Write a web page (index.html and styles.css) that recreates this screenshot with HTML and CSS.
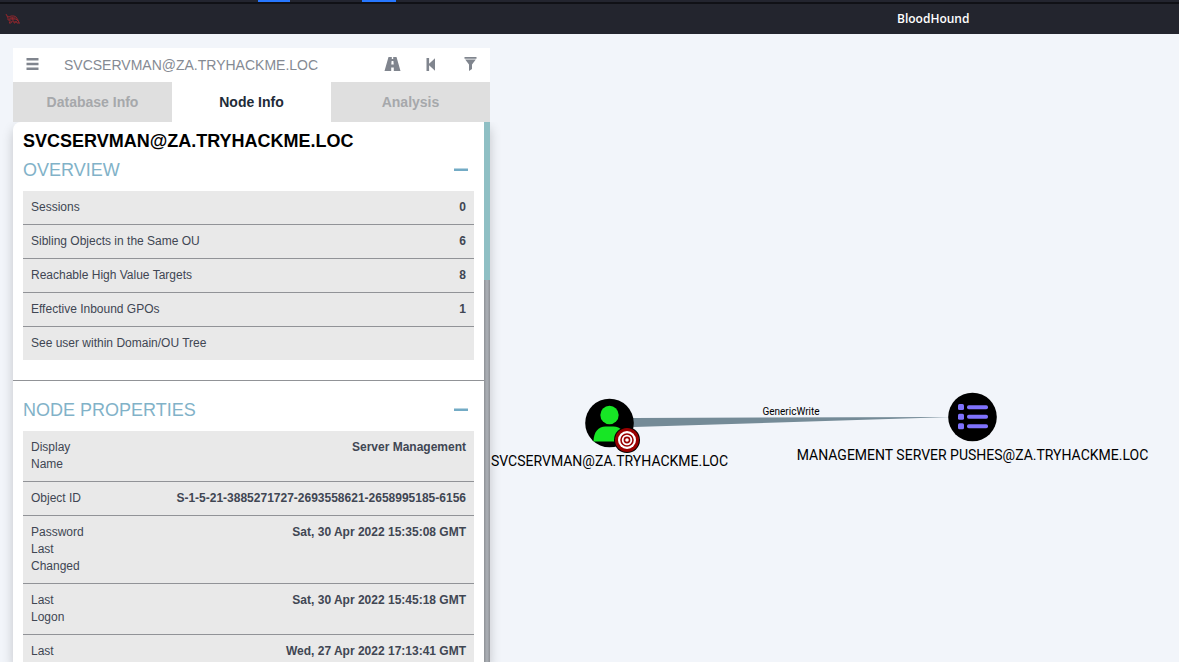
FILE: index.html
```html
<!DOCTYPE html>
<html lang="en">
<head>
<meta charset="utf-8">
<title>BloodHound</title>
<link rel="stylesheet" href="styles.css">
</head>
<body>
<div class="desktop-strip"><span class="task task-first"></span><span class="task task-second"></span></div>
<header class="titlebar">
  <svg class="logo" width="16" height="12" viewBox="0 0 16 12" aria-hidden="true">
    <path d="M1 1l1 2 2 1 2-1 3 0 2 1 2 3 1 3M2 3l1 2 0 2 2 0 0 2-1 1 2 0 1-2 2 0 0 2 1 0 1-2 1 2 3 0M5 5l5 0M4 6l7 0 2 2M7 4l1 3" />
  </svg>
  <h1 class="app-title">BloodHound</h1>
</header>
<main class="stage">
  <section class="graph" aria-label="Graph">
    <svg class="edges" aria-hidden="true"><polygon points="610,384 634,384 952,383 634,393 610,394"/></svg>
    <span class="edge-label">GenericWrite</span>
    <div class="node node-user">
      <svg width="51" height="50" viewBox="0 0 51 50" aria-hidden="true">
        <circle cx="25.5" cy="25" r="24.3"/>
        <circle cx="25.5" cy="17" r="9.2" fill="#17e625"/>
        <path d="M9.5 43.5C9.5 34 14.5 28.5 21.5 28.5h8C36.5 28.5 41.5 34 41.5 43.5z" fill="#17e625"/>
      </svg>
      <svg class="target" width="28" height="28" viewBox="0 0 28 28" aria-hidden="true">
        <circle cx="14" cy="14" r="13"/>
        <circle cx="14" cy="14" r="12" fill="#990000"/>
        <circle cx="14" cy="14" r="9" fill="#fff"/>
        <circle cx="14" cy="14" r="6" fill="none" stroke="#990000" stroke-width="1.6"/>
        <circle cx="14" cy="14" r="2.6" fill="none" stroke="#990000" stroke-width="1.6"/>
      </svg>
      <span class="node-label">SVCSERVMAN@ZA.TRYHACKME.LOC</span>
    </div>
    <div class="node node-gpo">
      <svg width="51" height="50" viewBox="0 0 51 50" aria-hidden="true">
        <circle cx="25.5" cy="25" r="24.3"/>
        <g fill="#7f72fd">
          <rect x="11" y="12" width="6" height="6" rx="1.5"/><rect x="20" y="13.3" width="21" height="4" rx="1.8"/>
          <rect x="11" y="21.8" width="6" height="6" rx="1.5"/><rect x="20" y="22.8" width="21" height="4" rx="1.8"/>
          <rect x="11" y="31.2" width="6" height="6" rx="1.5"/><rect x="20" y="32.2" width="21" height="4" rx="1.8"/>
        </g>
      </svg>
      <span class="node-label">MANAGEMENT SERVER PUSHES@ZA.TRYHACKME.LOC</span>
    </div>
  </section>

  <aside class="panel">
    <form class="search">
      <button class="icon-btn" type="button" aria-label="Menu">
        <svg width="13" height="12" viewBox="0 0 13 12"><path d="M.5 0h12v2.4H.5zM.5 4.8h12v2.4H.5zM.5 9.6h12V12H.5z"/></svg>
      </button>
      <input class="query" type="text" aria-label="Search for a node" value="SVCSERVMAN@ZA.TRYHACKME.LOC">
      <button class="icon-btn" type="button" aria-label="Pathfinding">
        <svg width="17" height="14" viewBox="0 0 17 14"><path fill-rule="evenodd" d="M4.5 0H7.8V2H9.2V0H12.5L16.5 14H9.8V10.5H7.2V14H.5zM7.6 4L7.3 7.5H9.7L9.4 4z"/></svg>
      </button>
      <button class="icon-btn" type="button" aria-label="Back">
        <svg width="10" height="13" viewBox="0 0 10 13"><path d="M.5 0h2.6v5.8L9 .3v12.4L3.1 7.2V13H.5z"/></svg>
      </button>
      <button class="icon-btn" type="button" aria-label="Filter">
        <svg width="13" height="14" viewBox="0 0 13 14"><path d="M.5 0h12v1.7H.5zM1.2 2.4h10.6L8 7.5V12L5 14V7.5z"/></svg>
      </button>
    </form>
    <nav class="tabs">
      <button class="tab" type="button">Database Info</button>
      <button class="tab tab-active" type="button">Node Info</button>
      <button class="tab" type="button">Analysis</button>
    </nav>
    <div class="sheet">
      <div class="content">
        <h2 class="node-name">SVCSERVMAN@ZA.TRYHACKME.LOC</h2>
        <div class="section-head"><h3 class="section-title">OVERVIEW</h3><button class="collapse" type="button" aria-label="Collapse overview"></button></div>
        <table class="facts">
          <tr><th scope="row">Sessions</th><td>0</td></tr>
          <tr><th scope="row">Sibling Objects in the Same OU</th><td>6</td></tr>
          <tr><th scope="row">Reachable High Value Targets</th><td>8</td></tr>
          <tr><th scope="row">Effective Inbound GPOs</th><td>1</td></tr>
          <tr><th scope="row">See user within Domain/OU Tree</th><td></td></tr>
        </table>
        <hr class="divider">
        <div class="section-head"><h3 class="section-title">NODE PROPERTIES</h3><button class="collapse" type="button" aria-label="Collapse node properties"></button></div>
        <table class="facts facts-narrow">
          <tr><th scope="row">Display Name</th><td>Server Management</td></tr>
          <tr><th scope="row">Object ID</th><td>S-1-5-21-3885271727-2693558621-2658995185-6156</td></tr>
          <tr><th scope="row">Password Last Changed</th><td>Sat, 30 Apr 2022 15:35:08 GMT</td></tr>
          <tr><th scope="row">Last Logon</th><td>Sat, 30 Apr 2022 15:45:18 GMT</td></tr>
          <tr><th scope="row">Last</th><td>Wed, 27 Apr 2022 17:13:41 GMT</td></tr>
        </table>
      </div>
      <div class="scrollbar"><div class="thumb"></div></div>
    </div>
  </aside>
</main>
</body>
</html>
```
FILE: styles.css
```css
* { box-sizing: border-box; }
body {
  margin: 0;
  height: 100vh;
  display: flex;
  flex-direction: column;
  overflow: hidden;
  background: #f2f5fa;
  font-family: "Liberation Sans", Arial, sans-serif;
  font-size: 12px;
  color: #404653;
}
h1, h2, h3 { margin: 0; }
button { border: 0; padding: 0; font: inherit; color: inherit; background: none; }

.desktop-strip {
  flex: none;
  display: flex;
  height: 4px;
  background: #23252f;
  border-bottom: 2px solid #101116;
}
.task { height: 2px; background: #2777ff; }
.task-first { width: 32px; margin-left: 258px; }
.task-second { width: 34px; margin-left: 72px; }
.titlebar {
  flex: none;
  display: flex;
  align-items: center;
  height: 30px;
  background: #23252e;
}
.logo { margin-left: 5px; fill: none; stroke: #8e262c; stroke-width: 1; }
.app-title {
  margin-left: calc(76% - 20px);
  font: 600 12px/30px "Open Sans", "Noto Sans", sans-serif;
  color: #fff;
}

.stage { position: relative; flex: 1; min-height: 0; display: flex; padding: 14px 13px 0; }
.graph { position: absolute; inset: 0; font-family: Roboto, sans-serif; color: #000; }
.edges { width: 100%; height: 100%; display: block; fill: #758b97; }
.edge-label { position: absolute; left: 791px; top: 372px; transform: translateX(-50%); font-size: 10px; line-height: 12px; }
.node { position: absolute; width: 51px; height: 50px; }
.node-user { left: 584px; top: 364px; }
.node-gpo { left: 947px; top: 358px; }
.target { position: absolute; left: 29px; top: 28px; }
.node-label {
  position: absolute;
  left: 50%;
  top: 54px;
  transform: translateX(-50%);
  white-space: nowrap;
  font-size: 14px;
  line-height: 18px;
}

.panel {
  position: relative;
  width: 477px;
  max-width: 100%;
  display: flex;
  flex-direction: column;
}
.search {
  flex: none;
  display: flex;
  align-items: center;
  height: 34px;
  padding: 0 13px;
  background: #fff;
}
.icon-btn { display: flex; justify-content: center; flex: none; padding-bottom: 2px; fill: #80858e; }
.icon-btn + .icon-btn { margin-left: 25px; }
.icon-btn:last-child { margin-left: 28px; }
.query {
  flex: 1;
  min-width: 0;
  margin-left: 25px;
  padding: 0;
  border: 0;
  background: none;
  font: 14px "Liberation Sans", Arial, sans-serif;
  color: #858a93;
}
.tabs { flex: none; display: grid; grid-template-columns: repeat(3, 1fr); height: 40px; }
.tab { background: #dfdfdf; color: #a6a8ab; font-size: 14px; font-weight: bold; }
.tab-active { background: #fff; color: #222b38; }

.sheet {
  flex: 1;
  min-height: 0;
  display: flex;
  background: #fff;
  border-radius: 8px 0 0 0;
  box-shadow: 0 6px 12px rgba(0, 0, 0, 0.2);
  clip-path: inset(0 -20px -20px -20px);
}
.content { flex: 1; min-width: 0; overflow: hidden; padding-top: 8px; }
.scrollbar { flex: none; width: 6px; background: linear-gradient(90deg, #8e9196, #a7abb1 40%, #a7abb1 60%, #8e9196); }
.thumb { height: 158px; background: #8fbfc4; }

.node-name { padding: 0 10px; font-size: 18px; line-height: 22px; color: #000; }
.section-head { display: flex; align-items: center; justify-content: space-between; padding: 8px 16px 10px 10px; }
.section-title { font-size: 18px; font-weight: normal; line-height: 21px; color: #81b2c8; }
.collapse { width: 14px; height: 3px; margin-bottom: 2px; border-top: 1px solid #b8d5e2; background: #73abc5; }
.facts { width: calc(100% - 20px); margin: 0 10px; border-spacing: 0; background: #e9e9e9; line-height: 17px; }
.facts th, .facts td { padding: 8px; border-bottom: 1px solid #919397; vertical-align: top; }
.facts th { font-weight: normal; text-align: left; }
.facts td { font-weight: bold; text-align: right; }
.facts tr:last-child th, .facts tr:last-child td { border-bottom: 0; }
.facts-narrow th { width: 1px; }
.divider { margin: 20px 0 11px; border: 0; border-top: 1px solid #919397; }
```
